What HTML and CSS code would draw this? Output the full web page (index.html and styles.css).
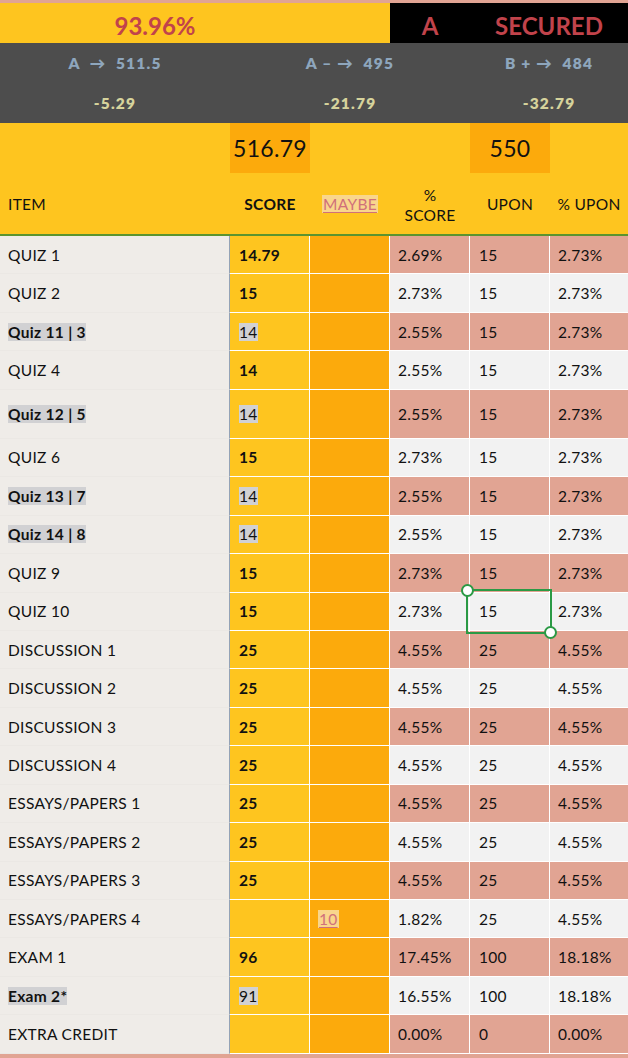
FILE: index.html
```html
<!DOCTYPE html>
<html>
<head>
<meta charset="utf-8">
<link rel="stylesheet" href="styles.css">
</head>
<body>
<div class="sheet">
  <div class="grid top">
    <div class="c span2 yel big red">93.96%</div>
    <div class="c yel"></div>
    <div class="c blk big red">A</div>
    <div class="c span2 blk big red">SECURED</div>
  </div>
  <div class="grid gray">
    <div class="c g1 blue">A &nbsp;→ &nbsp;511.5</div>
    <div class="c span3 blue">A – → &nbsp;495</div>
    <div class="c span2 blue">B + → &nbsp;484</div>
    <div class="c g1 khaki">-5.29</div>
    <div class="c span3 khaki">-21.79</div>
    <div class="c span2 khaki">-32.79</div>
  </div>
  <div class="grid totals">
    <div class="c"></div>
    <div class="c box">516.79</div>
    <div class="c"></div>
    <div class="c"></div>
    <div class="c box">550</div>
    <div class="c"></div>
  </div>
  <div class="grid head">
    <div class="c left">ITEM</div>
    <div class="c med">SCORE</div>
    <div class="c"><span class="link">MAYBE</span></div>
    <div class="c two">%<br>SCORE</div>
    <div class="c">UPON</div>
    <div class="c">% UPON</div>
  </div>

  <div class="grid row pink"><div class="c item">QUIZ 1</div><div class="c sc">14.79</div><div class="c mb"></div><div class="c v">2.69%</div><div class="c v">15</div><div class="c v last">2.73%</div></div>
  <div class="grid row lite"><div class="c item">QUIZ 2</div><div class="c sc">15</div><div class="c mb"></div><div class="c v">2.73%</div><div class="c v">15</div><div class="c v last">2.73%</div></div>
  <div class="grid row pink"><div class="c item"><span class="hl b">Quiz 11 | 3</span></div><div class="c sc"><span class="hl r">14</span></div><div class="c mb"></div><div class="c v">2.55%</div><div class="c v">15</div><div class="c v last">2.73%</div></div>
  <div class="grid row lite"><div class="c item">QUIZ 4</div><div class="c sc">14</div><div class="c mb"></div><div class="c v">2.55%</div><div class="c v">15</div><div class="c v last">2.73%</div></div>
  <div class="grid row pink tall"><div class="c item"><span class="hl b">Quiz 12 | 5</span></div><div class="c sc"><span class="hl r">14</span></div><div class="c mb"></div><div class="c v">2.55%</div><div class="c v">15</div><div class="c v last">2.73%</div></div>
  <div class="grid row lite"><div class="c item">QUIZ 6</div><div class="c sc">15</div><div class="c mb"></div><div class="c v">2.73%</div><div class="c v">15</div><div class="c v last">2.73%</div></div>
  <div class="grid row pink"><div class="c item"><span class="hl b">Quiz 13 | 7</span></div><div class="c sc"><span class="hl r">14</span></div><div class="c mb"></div><div class="c v">2.55%</div><div class="c v">15</div><div class="c v last">2.73%</div></div>
  <div class="grid row lite"><div class="c item"><span class="hl b">Quiz 14 | 8</span></div><div class="c sc"><span class="hl r">14</span></div><div class="c mb"></div><div class="c v">2.55%</div><div class="c v">15</div><div class="c v last">2.73%</div></div>
  <div class="grid row pink"><div class="c item">QUIZ 9</div><div class="c sc">15</div><div class="c mb"></div><div class="c v">2.73%</div><div class="c v">15</div><div class="c v last">2.73%</div></div>
  <div class="grid row lite"><div class="c item">QUIZ 10</div><div class="c sc">15</div><div class="c mb"></div><div class="c v">2.73%</div><div class="c v sel">15<span class="selbox"><span class="knob tl"></span><span class="knob br"></span></span></div><div class="c v last">2.73%</div></div>
  <div class="grid row pink"><div class="c item">DISCUSSION 1</div><div class="c sc">25</div><div class="c mb"></div><div class="c v">4.55%</div><div class="c v">25</div><div class="c v last">4.55%</div></div>
  <div class="grid row lite"><div class="c item">DISCUSSION 2</div><div class="c sc">25</div><div class="c mb"></div><div class="c v">4.55%</div><div class="c v">25</div><div class="c v last">4.55%</div></div>
  <div class="grid row pink"><div class="c item">DISCUSSION 3</div><div class="c sc">25</div><div class="c mb"></div><div class="c v">4.55%</div><div class="c v">25</div><div class="c v last">4.55%</div></div>
  <div class="grid row lite"><div class="c item">DISCUSSION 4</div><div class="c sc">25</div><div class="c mb"></div><div class="c v">4.55%</div><div class="c v">25</div><div class="c v last">4.55%</div></div>
  <div class="grid row pink"><div class="c item">ESSAYS/PAPERS 1</div><div class="c sc">25</div><div class="c mb"></div><div class="c v">4.55%</div><div class="c v">25</div><div class="c v last">4.55%</div></div>
  <div class="grid row lite"><div class="c item">ESSAYS/PAPERS 2</div><div class="c sc">25</div><div class="c mb"></div><div class="c v">4.55%</div><div class="c v">25</div><div class="c v last">4.55%</div></div>
  <div class="grid row pink"><div class="c item">ESSAYS/PAPERS 3</div><div class="c sc">25</div><div class="c mb"></div><div class="c v">4.55%</div><div class="c v">25</div><div class="c v last">4.55%</div></div>
  <div class="grid row lite"><div class="c item">ESSAYS/PAPERS 4</div><div class="c sc"></div><div class="c mb"><span class="link">10</span></div><div class="c v">1.82%</div><div class="c v">25</div><div class="c v last">4.55%</div></div>
  <div class="grid row pink"><div class="c item">EXAM 1</div><div class="c sc">96</div><div class="c mb"></div><div class="c v">17.45%</div><div class="c v">100</div><div class="c v last">18.18%</div></div>
  <div class="grid row lite"><div class="c item"><span class="hl m">Exam 2*</span></div><div class="c sc"><span class="hl r">91</span></div><div class="c mb"></div><div class="c v">16.55%</div><div class="c v">100</div><div class="c v last">18.18%</div></div>
  <div class="grid row pink"><div class="c item">EXTRA CREDIT</div><div class="c sc"></div><div class="c mb"></div><div class="c v">0.00%</div><div class="c v">0</div><div class="c v last">0.00%</div></div>
</div>
</body>
</html>
```

FILE: styles.css
```css
* { box-sizing: border-box; }
html, body { margin: 0; padding: 0; }
body {
  font-family: Lato, "Open Sans", sans-serif;
  color: #111;
  background: #e1a493;
  width: 628px;
  height: 1058px;
  overflow: hidden;
}
.sheet {
  width: 628px;
  border-top: 3px solid #e1a493;
  border-bottom: 4px solid #e1a493;
}
.grid {
  display: grid;
  grid-template-columns: 230px 80px 80px 80px 80px 78px;
}
.c {
  display: flex;
  align-items: center;
  justify-content: center;
  min-width: 0;
  white-space: nowrap;
}
.span2 { grid-column: span 2; }
.span3 { grid-column: span 3; }

/* top band */
.top { height: 40px; }
.yel { background: #fec51f; }
.blk { background: #000; }
.big { font-size: 24px; font-weight: 700; padding-top: 5px; }
.red { color: #c1434b; }

/* gray band */
.gray {
  background: #4d4d4d;
  grid-auto-rows: 40px;
  font-weight: 800;
  font-size: 15.5px;
  letter-spacing: 1.2px;
}
.blue { color: #8ea6bd; }
.khaki { color: #d6d39c; }

/* totals */
.totals {
  height: 50px;
  background: #fec51f;
  font-size: 23px;
  letter-spacing: 0.3px;
}
.box { background: #fcaa0c; }

/* header */
.head {
  height: 63px;
  background: #fec51f;
  border-bottom: 2px solid #5b942f;
  font-size: 15.5px;
  letter-spacing: 0.3px;
}
.head .left { justify-content: flex-start; padding-left: 8px; }
.head .med { font-weight: 700; }
.head .two { text-align: center; line-height: 20px; padding-top: 2px; }
.link {
  color: #d0707a;
  background: #f9d68d;
  text-decoration: underline;
  text-decoration-thickness: 1px;
  text-underline-offset: 2px;
  padding: 0 1px;
}

/* data rows */
.row { height: 38.45px; font-size: 15.5px; letter-spacing: 0.3px; }
.row.tall { height: 49px; }
.row .c { justify-content: flex-start; border-bottom: 1px solid #fff; }
.row .item {
  background: #efece8;
  padding-left: 8px;
  border-right: 1px solid #94a3b6;
  border-bottom-color: #ebe8e4;
}
.row .sc {
  background: #fec51f;
  font-weight: 700;
  padding-left: 9px;
  border-right: 1px solid #fff;
}
.row .mb {
  background: #fcaa0c;
  padding-left: 8px;
  border-right: 1px solid #fff;
}
.row .v { padding-left: 8px; border-right: 1px solid #fff; }
.row .v.last { border-right: 0; }
.row .v:nth-child(5) { padding-left: 9px; }
.pink .v { background: #e1a493; }
.lite .v { background: #f2f2f2; }

.hl { background: #d1d1d3; }
.hl.b { font-weight: 700; }
.hl.m { font-weight: 700; }
.hl.r { font-weight: 400; }

/* selection */
.sel { position: relative; }
.selbox {
  position: absolute;
  left: -4px;
  top: -4px;
  right: -3px;
  bottom: -4px;
  border: 2px solid #2b9a45;
}
.knob {
  position: absolute;
  width: 13px;
  height: 13px;
  border-radius: 50%;
  background: #fff;
  border: 2px solid #2b9a45;
}
.knob.tl { left: -7px; top: -7px; }
.knob.br { right: -7px; bottom: -7px; }
```
